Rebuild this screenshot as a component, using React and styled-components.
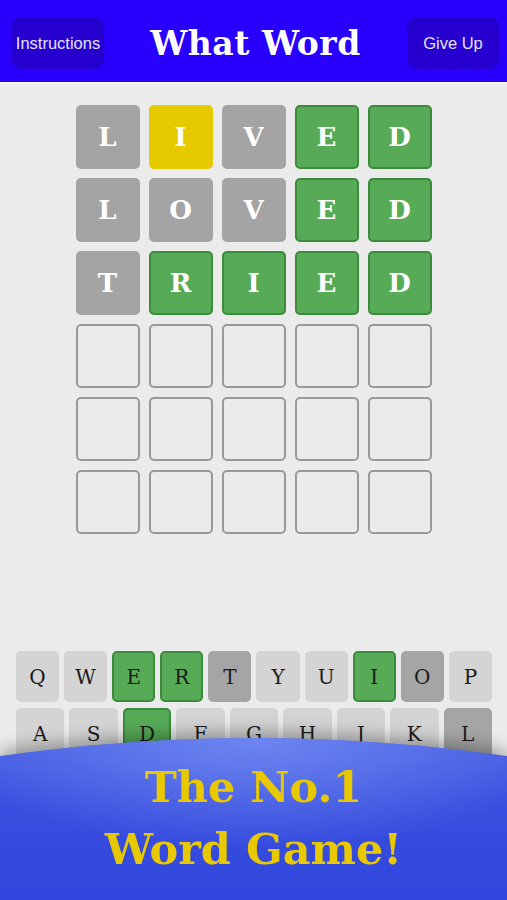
import React from "react"
import styled, { createGlobalStyle } from "styled-components"

const GlobalStyle = createGlobalStyle`
  html, body {
    margin: 0;
    padding: 0;
    background: #ebebeb;
  }
`

const guesses = [
  [["L", "grey"], ["I", "yellow"], ["V", "grey"], ["E", "green"], ["D", "green"]],
  [["L", "grey"], ["O", "grey"], ["V", "grey"], ["E", "green"], ["D", "green"]],
  [["T", "grey"], ["R", "green"], ["I", "green"], ["E", "green"], ["D", "green"]],
]

const keyRows = [
  "QWERTYUIOP".split(""),
  "ASDFGHJKL".split(""),
]

// keyboard colours follow the guesses above
const keyState = {
  E: "green", R: "green", I: "green", D: "green",
  T: "grey", O: "grey", L: "grey",
}

const emptyRow = [["", "empty"], ["", "empty"], ["", "empty"], ["", "empty"], ["", "empty"]]

export default function App() {
  const rows = []
  for (let r = 0; r < 6; r++) {
    rows.push(guesses[r] || emptyRow)
  }

  return (
    <Screen>
      <GlobalStyle />
      <Header>
        <HeaderButton>Instructions</HeaderButton>
        <Title>What Word</Title>
        <HeaderButton>Give Up</HeaderButton>
      </Header>

      <Board>
        {rows.map((row, i) => (
          <BoardRow key={i}>
            {row.map(([letter, state], j) => (
              <Tile key={j} $state={state}>
                {letter}
              </Tile>
            ))}
          </BoardRow>
        ))}
      </Board>

      <Keyboard>
        {keyRows.map((row, i) => (
          <KeyRow key={i}>
            {row.map((k) => (
              <Key key={k} $state={keyState[k] || "default"}>
                {k}
              </Key>
            ))}
          </KeyRow>
        ))}
      </Keyboard>

      <BannerShadow>
        <Banner>
          <BannerText>The No.1</BannerText>
          <BannerText>Word Game!</BannerText>
        </Banner>
      </BannerShadow>
    </Screen>
  )
}

const tileColors = {
  grey: { bg: "#a4a4a4", border: "#a4a4a4" },
  yellow: { bg: "#e7c900", border: "#e7c900" },
  green: { bg: "#57ab57", border: "#3c8a3c" },
  empty: { bg: "#ebebeb", border: "#999999" },
}

const keyColors = {
  default: { bg: "#d4d4d4", border: "#d4d4d4" },
  grey: { bg: "#a5a5a5", border: "#a5a5a5" },
  green: { bg: "#57ab57", border: "#3c8a3c" },
}

const Screen = styled.div`
  position: relative;
  width: 507px;
  height: 900px;
  overflow: hidden;
  background: #ebebeb;
  display: flex;
  flex-direction: column;
`

const Header = styled.header`
  height: 82px;
  background: #2a00fd;
  border-bottom: 2px solid #f6f6f6;
  display: flex;
  align-items: center;
  justify-content: space-between;
  padding: 0 8px 0 12px;
  box-sizing: content-box;
`

const HeaderButton = styled.button`
  width: 92px;
  height: 52px;
  margin-top: 4px;
  border: none;
  border-radius: 9px;
  background: #2500cf;
  color: #e4e2f4;
  font-family: "Liberation Sans", Arial, sans-serif;
  font-size: 16.5px;
  padding: 0;
`

const Title = styled.h1`
  margin: 4px 0 0;
  color: #ffffff;
  font-family: "DejaVu Serif", serif;
  font-weight: bold;
  font-size: 33px;
  letter-spacing: 0.5px;
`

const Board = styled.div`
  margin: 21px auto 0;
  display: grid;
  grid-template-rows: repeat(6, 64px);
  row-gap: 9px;
`

const BoardRow = styled.div`
  display: grid;
  grid-template-columns: repeat(5, 64px);
  column-gap: 9px;
`

const Tile = styled.div`
  box-sizing: border-box;
  width: 64px;
  height: 64px;
  border-radius: 5px;
  border: 2px solid ${(p) => tileColors[p.$state].border};
  background: ${(p) => tileColors[p.$state].bg};
  color: #ffffff;
  display: flex;
  align-items: center;
  justify-content: center;
  font-family: "DejaVu Serif", serif;
  font-weight: bold;
  font-size: 26px;
`

const Keyboard = styled.div`
  margin: 117px 15px 0 16px;
  display: flex;
  flex-direction: column;
  gap: 6px;
`

const KeyRow = styled.div`
  display: flex;
  gap: 5px;
`

const Key = styled.div`
  flex: 1;
  box-sizing: border-box;
  height: 51px;
  border-radius: 5px;
  border: 2px solid ${(p) => keyColors[p.$state].border};
  background: ${(p) => keyColors[p.$state].bg};
  color: #1a1a1a;
  display: flex;
  align-items: center;
  justify-content: center;
  font-family: "DejaVu Serif", serif;
  font-size: 20px;
`

const BannerShadow = styled.div`
  position: absolute;
  left: 0;
  right: 0;
  bottom: 0;
  height: 162px;
  filter: drop-shadow(0 -6px 8px rgba(0, 0, 0, 0.3));
`

const Banner = styled.div`
  height: 100%;
  clip-path: ellipse(853px 400px at 50% 400px);
  background:
    radial-gradient(ellipse 320px 110px at 50% 0%, rgba(115, 140, 242, 0.85), rgba(115, 140, 242, 0) 100%),
    linear-gradient(180deg, #4860e3 0%, #3a4fdf 40%, #3046dc 100%);
  display: flex;
  flex-direction: column;
  align-items: center;
  padding-top: 18px;
  box-sizing: border-box;
`

const BannerText = styled.div`
  color: #e8c800;
  font-family: "DejaVu Serif", serif;
  font-weight: bold;
  font-size: 43px;
  line-height: 62px;
`
